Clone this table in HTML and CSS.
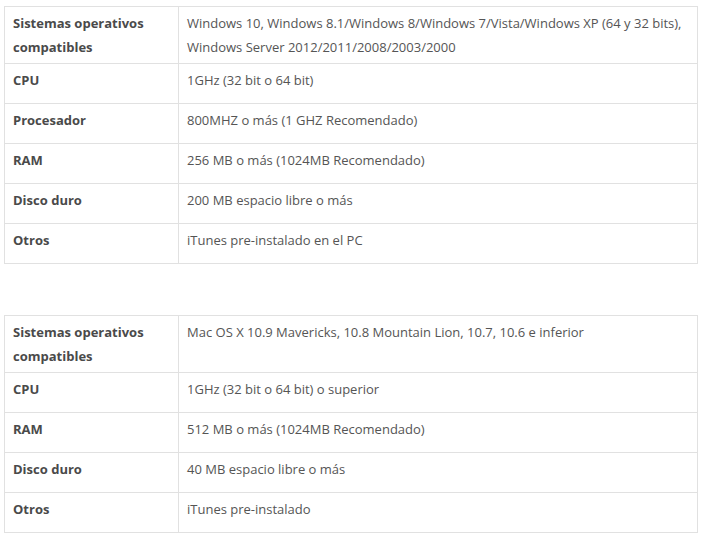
FILE: index.html
```html
<!DOCTYPE html>
<html lang="es">
<head>
<meta charset="utf-8">
<link rel="stylesheet" href="styles.css">
</head>
<body>
<div class="page">
  <table class="specs">
    <colgroup><col class="c-label"><col></colgroup>
    <tbody>
      <tr class="tall"><td class="label">Sistemas operativos compatibles</td><td>Windows 10, Windows 8.1/Windows 8/Windows 7/Vista/Windows XP (64 y 32 bits), Windows Server 2012/2011/2008/2003/2000</td></tr>
      <tr><td class="label">CPU</td><td>1GHz (32 bit o 64 bit)</td></tr>
      <tr><td class="label">Procesador</td><td>800MHZ o más (1 GHZ Recomendado)</td></tr>
      <tr><td class="label">RAM</td><td>256 MB o más (1024MB Recomendado)</td></tr>
      <tr><td class="label">Disco duro</td><td>200 MB espacio libre o más</td></tr>
      <tr><td class="label">Otros</td><td>iTunes pre-instalado en el PC</td></tr>
    </tbody>
  </table>
  <table class="specs">
    <colgroup><col class="c-label"><col></colgroup>
    <tbody>
      <tr class="tall"><td class="label">Sistemas operativos compatibles</td><td>Mac OS X 10.9 Mavericks, 10.8 Mountain Lion, 10.7, 10.6 e inferior</td></tr>
      <tr><td class="label">CPU</td><td>1GHz (32 bit o 64 bit) o superior</td></tr>
      <tr><td class="label">RAM</td><td>512 MB o más (1024MB Recomendado)</td></tr>
      <tr><td class="label">Disco duro</td><td>40 MB espacio libre o más</td></tr>
      <tr><td class="label">Otros</td><td>iTunes pre-instalado</td></tr>
    </tbody>
  </table>
</div>
</body>
</html>
```
FILE: styles.css
```css
html, body {
  margin: 0;
  background: #fff;
}
.page {
  padding: 6px 0 0 4px;
  display: flex;
  flex-direction: column;
  gap: 51px;
  font-family: "Open Sans", "Liberation Sans", sans-serif;
  font-size: 13px;
  line-height: 24px;
  color: #555;
}
.specs {
  border-collapse: collapse;
  width: 694px;
  table-layout: fixed;
}
.c-label {
  width: 174px;
}
.specs tr {
  height: 40px;
}
.specs td {
  border: 1px solid #e1e1e1;
  padding: 4px 8px;
  vertical-align: top;
}
.specs .label {
  font-weight: bold;
  color: #4a4a4a;
}
```
